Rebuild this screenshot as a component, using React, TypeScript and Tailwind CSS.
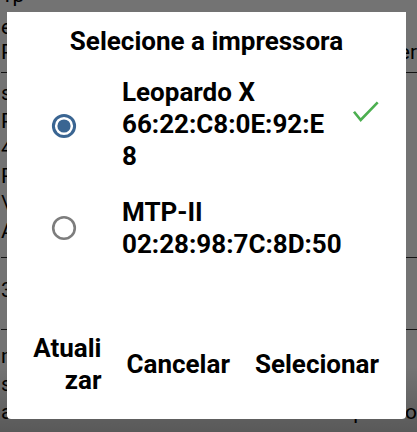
import React from "react";

function RadioOn() {
  return (
    <svg width="26" height="26" viewBox="0 0 26 26">
      <circle cx="13" cy="13" r="10.6" fill="none" stroke="#3a6592" strokeWidth="3" />
      <circle cx="13" cy="13" r="6.6" fill="#3a6592" />
    </svg>
  );
}

function RadioOff() {
  return (
    <svg width="26" height="26" viewBox="0 0 26 26">
      <circle cx="13" cy="13" r="10.8" fill="none" stroke="#7d7d7d" strokeWidth="2.6" />
    </svg>
  );
}

function Check() {
  return (
    <svg width="28" height="23" viewBox="0 0 28 23">
      <polyline points="2,11.7 8.7,20 25.7,2.3" fill="none" stroke="#4caf50" strokeWidth="2.6" />
    </svg>
  );
}

export default function App() {
  return (
    <div className="relative w-[417px] h-[432px] overflow-hidden bg-white font-['Roboto',sans-serif] text-black">
      {/* background page */}
      <div className="flex flex-col text-[21px] pl-[1px]">
        <div className="h-[72px] overflow-hidden">
          <div className="-mt-[17px] leading-[25px]">
            <div className="h-[32px] leading-[25px]">Tp</div>
            <div>e</div>
            <div className="flex justify-between"><span>P</span><span>Fazer</span></div>
          </div>
        </div>
        <div className="h-[185px] border-t border-[#2a2a2a] pt-[7px] leading-[27.5px]">
          <div>s</div>
          <div>P</div>
          <div>4</div>
          <div>R</div>
          <div>\</div>
          <div>A</div>
        </div>
        <div className="h-[72px] border-t border-[#2a2a2a] pt-[18px] leading-[28px]">
          <div>3</div>
        </div>
        <div className="border-t border-[#2a2a2a] pt-[12px] leading-[28px]">
          <div>m</div>
          <div>s</div>
          <div className="flex justify-between"><span>adicionais e outros itens</span><span>Fazer pedido</span></div>
        </div>
      </div>

      {/* dim overlay */}
      <div className="absolute inset-0 bg-gradient-to-b from-[rgba(0,0,0,0.55)] via-[rgba(0,0,0,0.55)] via-85% to-[rgba(0,0,0,0.65)]" />

      {/* dialog */}
      <div className="absolute left-[7px] top-[12px] w-[399px] h-[407px] bg-white rounded-b-[4px] flex flex-col">
        <div className="pt-[14px] text-center text-[26px] leading-[30px] font-bold">
          Selecione a impressora
        </div>

        <div className="flex mt-[20px] pl-[44px]">
          <div className="mt-[37px]">
            <RadioOn />
          </div>
          <div className="ml-[45px] w-[212px] text-[26px] leading-[32px] font-bold [overflow-wrap:anywhere]">
            Leopardo X 66:22:C8:0E:92:E8
          </div>
          <div className="mt-[24px] ml-[18px]">
            <Check />
          </div>
        </div>

        <div className="flex items-center mt-[24px] pl-[44px]">
          <RadioOff />
          <div className="ml-[45px] text-[26px] leading-[32px] font-bold">
            <div>MTP-II</div>
            <div>02:28:98:7C:8D:50</div>
          </div>
        </div>

        <div className="flex items-center justify-end mt-auto mb-[23px] pr-[27px] gap-[25px] text-[26px] leading-[32px] font-bold">
          <div className="w-[70px] text-right [overflow-wrap:anywhere]">Atualizar</div>
          <div>Cancelar</div>
          <div>Selecionar</div>
        </div>
      </div>
    </div>
  );
}
